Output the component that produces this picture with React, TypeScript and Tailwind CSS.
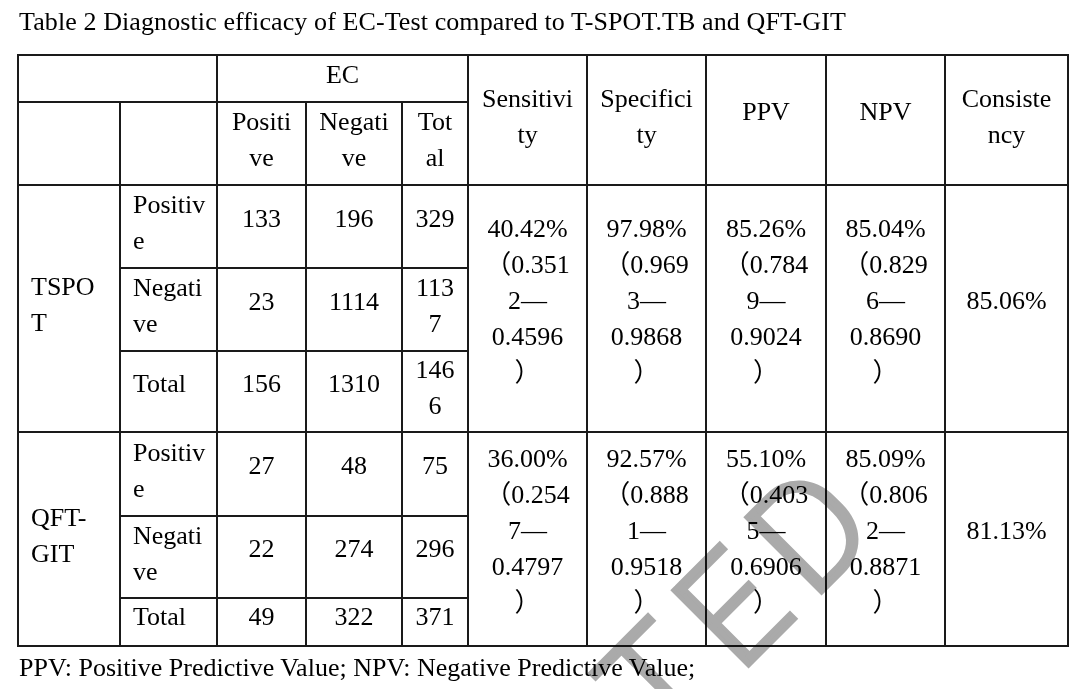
import type { ReactNode } from "react";

const cell = "border-2 border-[#1a1a1a] align-middle leading-[36px]";

function C({
  children,
  span,
  rows,
  left,
  t,
}: {
  children?: ReactNode;
  span?: number;
  rows?: number;
  left?: boolean;
  t?: boolean;
}) {
  return (
    <td
      colSpan={span}
      rowSpan={rows}
      className={`${cell} ${t ? "pb-[7px]" : "pb-[16px]"} ${left ? "text-left pl-[12px]" : "text-center"}`}
    >
      {children}
    </td>
  );
}

function Metric({ lines }: { lines: string[] }) {
  return (
    <td rowSpan={3} className={`${cell} pb-[16px] text-center`}>
      {lines.map((l, i) => (
        <div key={i}>{l}</div>
      ))}
    </td>
  );
}

const tspot = [
  ["40.42%", "（0.351", "2—", "0.4596", "）"],
  ["97.98%", "（0.969", "3—", "0.9868", "）"],
  ["85.26%", "（0.784", "9—", "0.9024", "）"],
  ["85.04%", "（0.829", "6—", "0.8690", "）"],
];

const qft = [
  ["36.00%", "（0.254", "7—", "0.4797", "）"],
  ["92.57%", "（0.888", "1—", "0.9518", "）"],
  ["55.10%", "（0.403", "5—", "0.6906", "）"],
  ["85.09%", "（0.806", "2—", "0.8871", "）"],
];

export default function App() {
  return (
    <div className="relative w-[1080px] h-[689px] overflow-hidden bg-white text-black text-[26px] font-['Liberation_Serif','Noto_Sans_CJK_SC',serif]">
      <div className="pl-[19px] pt-[4px] leading-[36px] tracking-[0.1px]">
        Table 2 Diagnostic efficacy of EC-Test compared to T-SPOT.TB and QFT-GIT
      </div>
      <div className="pl-[17px] pt-[14px]">
        <table className="table-fixed border-collapse w-[1050px]">
          <colgroup>
            <col className="w-[102px]" />
            <col className="w-[97px]" />
            <col className="w-[89px]" />
            <col className="w-[96px]" />
            <col className="w-[66px]" />
            <col className="w-[119px]" />
            <col className="w-[119px]" />
            <col className="w-[120px]" />
            <col className="w-[119px]" />
            <col className="w-[123px]" />
          </colgroup>
          <tbody>
            <tr className="h-[47px]">
              <C span={2} t />
              <C span={3} t>EC</C>
              <C rows={2} t>Sensitivi<br />ty</C>
              <C rows={2} t>Specifici<br />ty</C>
              <C rows={2}>PPV</C>
              <C rows={2}>NPV</C>
              <C rows={2} t>Consiste<br />ncy</C>
            </tr>
            <tr className="h-[83px]">
              <C />
              <C />
              <C t>Positi<br />ve</C>
              <C t>Negati<br />ve</C>
              <C t>Tot<br />al</C>
            </tr>
            <tr className="h-[83px]">
              <C rows={3} left t>TSPO<br />T</C>
              <C left t>Positiv<br />e</C>
              <C>133</C>
              <C>196</C>
              <C>329</C>
              {tspot.map((m, i) => (
                <Metric key={i} lines={m} />
              ))}
              <C rows={3}>85.06%</C>
            </tr>
            <tr className="h-[83px]">
              <C left t>Negati<br />ve</C>
              <C>23</C>
              <C>1114</C>
              <C t>113<br />7</C>
            </tr>
            <tr className="h-[81px]">
              <C left>Total</C>
              <C>156</C>
              <C>1310</C>
              <C t>146<br />6</C>
            </tr>
            <tr className="h-[84px]">
              <C rows={3} left t>QFT-<br />GIT</C>
              <C left t>Positiv<br />e</C>
              <C>27</C>
              <C>48</C>
              <C>75</C>
              {qft.map((m, i) => (
                <Metric key={i} lines={m} />
              ))}
              <C rows={3}>81.13%</C>
            </tr>
            <tr className="h-[82px]">
              <C left t>Negati<br />ve</C>
              <C>22</C>
              <C>274</C>
              <C>296</C>
            </tr>
            <tr className="h-[48px] [&>td]:pb-[10px]">
              <C left t>Total</C>
              <C t>49</C>
              <C t>322</C>
              <C t>371</C>
            </tr>
          </tbody>
        </table>
      </div>
      <div className="pl-[19px] pt-[3px] leading-[36px]">
        PPV: Positive Predictive Value; NPV: Negative Predictive Value;
      </div>
      <div className="pointer-events-none absolute left-[181px] top-[1055px] origin-top-left -rotate-45 mix-blend-multiply whitespace-nowrap leading-none font-light tracking-[18px] text-[150px] font-['Roboto',sans-serif] text-[#aaaaaa] [-webkit-text-stroke:4px_#aaaaaa]">
        ACCEPTED
      </div>
    </div>
  );
}
